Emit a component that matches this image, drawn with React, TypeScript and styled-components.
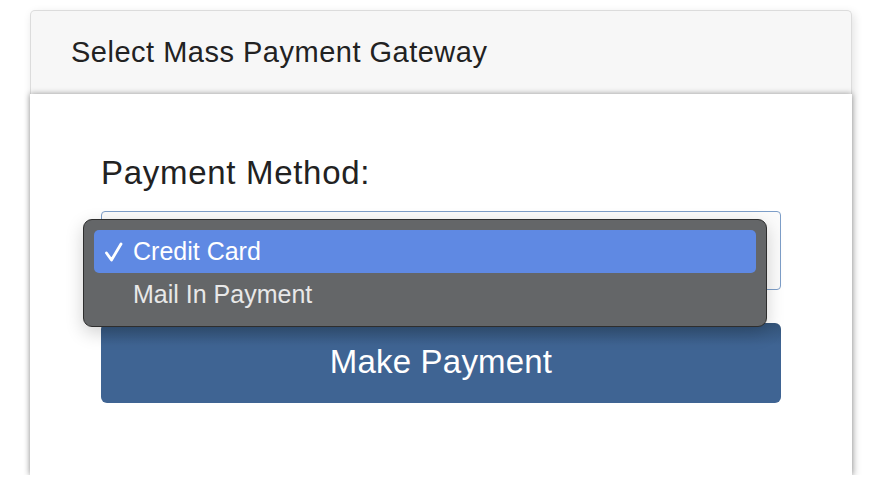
import React from 'react';
import styled, { createGlobalStyle } from 'styled-components';

const GlobalStyle = createGlobalStyle`
  html, body {
    margin: 0;
    background: #ffffff;
    font-family: 'Liberation Sans', Arial, sans-serif;
  }
`

const Page = styled.div`
  padding: 10px 22px 0 30px;
`

const Card = styled.div`
  width: 822px;
  border-radius: 5px 5px 0 0;
  box-shadow: 2px 3px 10px rgba(0, 0, 0, 0.12);
`

const Header = styled.div`
  height: 84px;
  box-sizing: border-box;
  display: flex;
  align-items: center;
  padding: 0 40px 1px;
  background: #f7f7f7;
  border: 1px solid #dcdcdc;
  border-bottom: none;
  border-radius: 5px 5px 0 0;
  font-size: 29px;
  letter-spacing: 0.5px;
  color: #222;
`

const Body = styled.div`
  position: relative;
  z-index: 1;
  height: 381px;
  box-sizing: border-box;
  padding: 60px 71px 0;
  background: #fff;
  box-shadow: 0 0 6px rgba(0, 0, 0, 0.4);
  display: flex;
  flex-direction: column;
`

const Label = styled.div`
  font-size: 33px;
  line-height: 38px;
  letter-spacing: 0.7px;
  color: #222;
  margin-bottom: 19px;
`

const SelectWrap = styled.div`
  position: relative;
  height: 79px;
  box-sizing: border-box;
  border: 1px solid #7d9ec8;
  border-radius: 4px;
  background: #fbfbfb;
  margin-bottom: 33px;
`

const Popup = styled.div`
  position: absolute;
  left: -19px;
  top: 7px;
  width: 684px;
  height: 108px;
  box-sizing: border-box;
  padding: 10px 10px;
  background: #646668;
  border: 1px solid #2e2e2e;
  border-radius: 9px;
  box-shadow: 0 6px 18px rgba(0, 0, 0, 0.18);
  display: flex;
  flex-direction: column;
`

const Option = styled.div<{ $active?: boolean }>`
  height: 43px;
  display: flex;
  align-items: center;
  padding-left: 10px;
  border-radius: 5px;
  font-size: 25px;
  background: ${p => (p.$active ? '#5f89e3' : 'transparent')};
  color: ${p => (p.$active ? '#ffffff' : '#e8e8e8')};
`

const Check = styled.span`
  width: 29px;
  display: inline-flex;
  align-items: center;
`

const PayButton = styled.button`
  height: 80px;
  border: none;
  border-radius: 6px;
  background: linear-gradient(to bottom, #345479 0%, #3f6493 28%, #3f6493 100%);
  color: #fff;
  font-family: 'Liberation Sans', Arial, sans-serif;
  font-size: 33px;
  letter-spacing: 0.2px;
  padding: 0 0 2px;
`

export default function App() {
  return (
    <Page>
      <GlobalStyle />
      <Card>
        <Header>Select Mass Payment Gateway</Header>
        <Body>
          <Label>Payment Method:</Label>
          <SelectWrap>
            <Popup>
              <Option $active>
                <Check>
                  <svg width="20" height="22" viewBox="0 0 20 22">
                    <path d="M2.5 12 L7.5 19 L17 3" fill="none" stroke="#fff" strokeWidth="2.8" strokeLinecap="round" strokeLinejoin="round" />
                  </svg>
                </Check>
                Credit Card
              </Option>
              <Option>
                <Check />
                Mail In Payment
              </Option>
            </Popup>
          </SelectWrap>
          <PayButton>Make Payment</PayButton>
        </Body>
      </Card>
    </Page>
  )
}
